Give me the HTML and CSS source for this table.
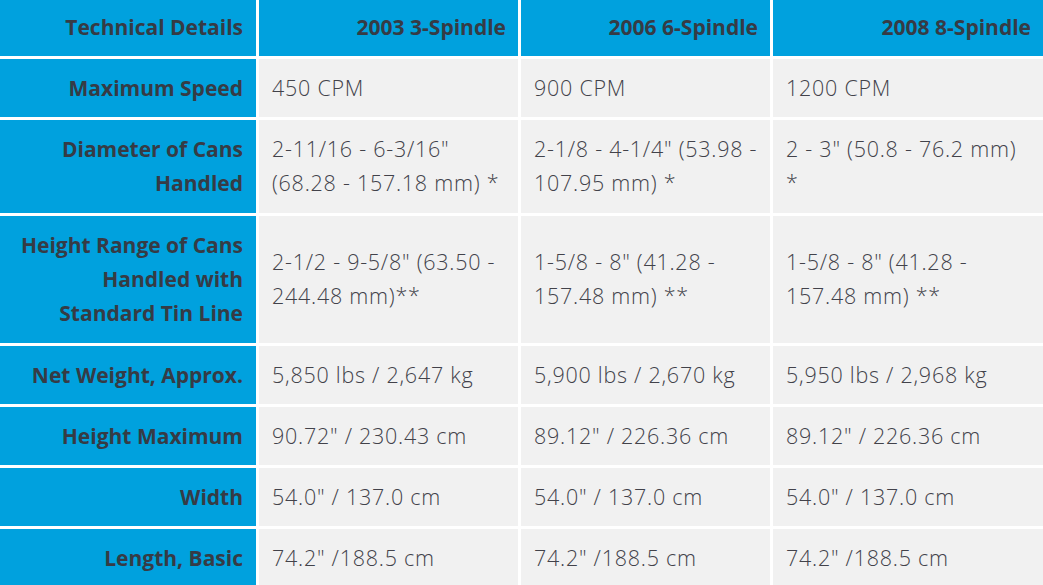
FILE: index.html
```html
<!DOCTYPE html>
<html>
<head>
<meta charset="utf-8">
<link rel="stylesheet" href="styles.css">
</head>
<body>
<table class="specs">
  <colgroup>
    <col class="c1"><col class="c2"><col class="c3"><col class="c4">
  </colgroup>
  <thead>
    <tr>
      <th class="label">Technical Details</th>
      <th class="head">2003 3-Spindle</th>
      <th class="head">2006 6-Spindle</th>
      <th class="head">2008 8-Spindle</th>
    </tr>
  </thead>
  <tbody>
    <tr>
      <th class="label">Maximum Speed</th>
      <td>450 CPM</td><td>900 CPM</td><td>1200 CPM</td>
    </tr>
    <tr>
      <th class="label">Diameter of Cans Handled</th>
      <td>2-11/16 - 6-3/16" (68.28 - 157.18 mm) *</td>
      <td>2-1/8 - 4-1/4" (53.98 - 107.95 mm) *</td>
      <td>2 - 3" (50.8 - 76.2 mm) *</td>
    </tr>
    <tr>
      <th class="label">Height Range of Cans Handled with Standard Tin Line</th>
      <td>2-1/2 - 9-5/8" (63.50 - 244.48 mm)**</td>
      <td>1-5/8 - 8" (41.28 - 157.48 mm) **</td>
      <td>1-5/8 - 8" (41.28 - 157.48 mm) **</td>
    </tr>
    <tr>
      <th class="label">Net Weight, Approx.</th>
      <td>5,850 lbs / 2,647 kg</td><td>5,900 lbs / 2,670 kg</td><td>5,950 lbs / 2,968 kg</td>
    </tr>
    <tr>
      <th class="label">Height Maximum</th>
      <td>90.72" / 230.43 cm</td><td>89.12" / 226.36 cm</td><td>89.12" / 226.36 cm</td>
    </tr>
    <tr>
      <th class="label">Width</th>
      <td>54.0" / 137.0 cm</td><td>54.0" / 137.0 cm</td><td>54.0" / 137.0 cm</td>
    </tr>
    <tr>
      <th class="label">Length, Basic</th>
      <td>74.2" /188.5 cm</td><td>74.2" /188.5 cm</td><td>74.2" /188.5 cm</td>
    </tr>
  </tbody>
</table>
</body>
</html>
```

FILE: styles.css
```css
html, body {
  margin: 0;
  padding: 0;
  background: #ffffff;
  overflow: hidden;
}
.specs {
  border-collapse: separate;
  border-spacing: 3px;
  margin: -5.5px 0 0 -3px;
  table-layout: fixed;
  width: 1049px;
  font-family: "Open Sans", "Noto Sans", sans-serif;
  font-size: 21.5px;
  line-height: 34.3px;
  color: #3d3d45;
}
.c1 { width: 256px; }
.c2 { width: 259px; }
.c3 { width: 249px; }
.c4 { width: 270px; }
.specs th, .specs td {
  padding: 12px 6px 12px 13px;
  vertical-align: middle;
}
.specs th {
  background: #00a1de;
  font-size: 21px;
  font-weight: 700;
  text-align: right;
  color: #363b45;
  padding-right: 13px;
}
.specs th.head {
  padding-right: 12px;
}
.specs td {
  background: #f1f1f1;
  font-weight: 300;
  letter-spacing: 0.75px;
  text-align: left;
  color: #42424a;
}
.specs td:last-child {
  padding-right: 24px;
}
```
